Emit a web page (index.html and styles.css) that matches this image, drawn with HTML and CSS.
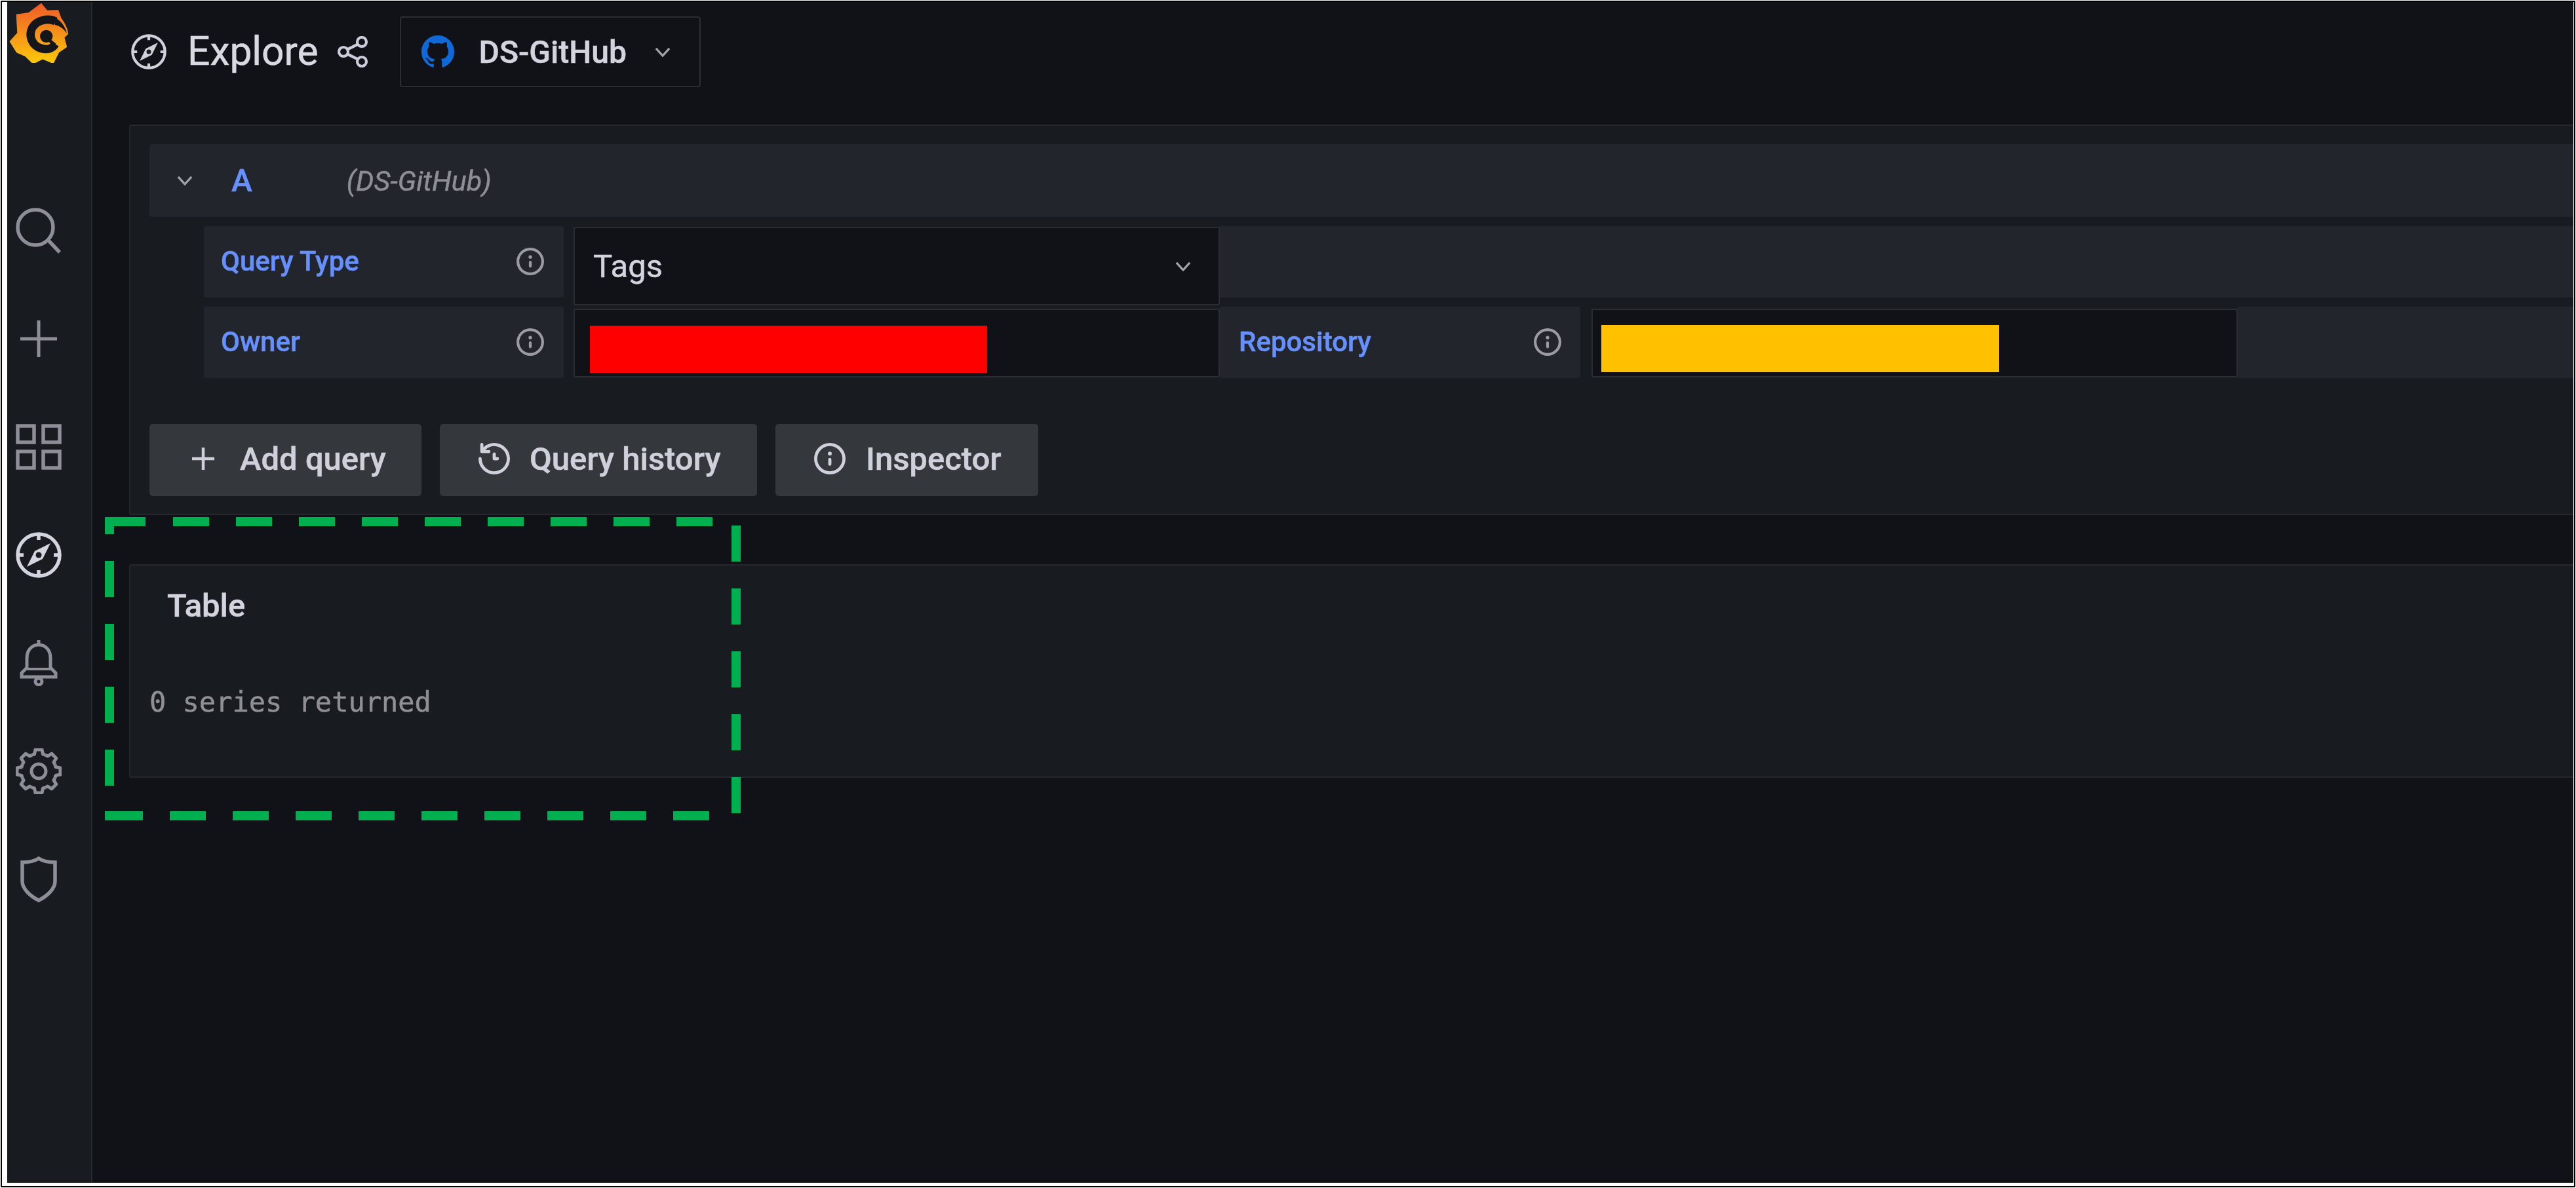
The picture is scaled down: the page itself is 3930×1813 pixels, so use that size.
FILE: index.html
```html
<!DOCTYPE html>
<html lang="en">
<head>
<meta charset="utf-8">
<title>Explore</title>
<link rel="stylesheet" href="styles.css">
</head>
<body>
<svg class="defs" aria-hidden="true">
  <symbol id="i-info" viewBox="2 2 20 20"><path d="M12,2A10,10,0,1,0,22,12,10.01,10.01,0,0,0,12,2Zm0,18a8,8,0,1,1,8-8A8.01,8.01,0,0,1,12,20Zm0-8.5a1,1,0,0,0-1,1v3a1,1,0,0,0,2,0v-3A1,1,0,0,0,12,11.5Zm0-4a1.25,1.25,0,1,0,1.25,1.25A1.25,1.25,0,0,0,12,7.5Z"/></symbol>
  <symbol id="i-chev" viewBox="0 0 26 16"><path d="M2 2 L13 14 L24 2" fill="none" stroke="currentColor" stroke-width="3.6"/></symbol>
  <symbol id="i-compass" viewBox="0 0 70 70">
    <circle cx="35" cy="35" r="32" fill="none" stroke="currentColor" stroke-width="5.5"/>
    <path d="M35 4V12M35 58V66M4 35H12M58 35H66" stroke="currentColor" stroke-width="5.5"/>
    <path d="M53 17 L41 41 L17 53 L29 29Z" fill="currentColor"/>
    <circle cx="35" cy="35" r="4.5" fill="#181b1f"/>
  </symbol>
  <g id="tooth"><path d="M-10.3-24.9L-6.5-26L-5-33L5-33L6.5-26L10.3-24.9" fill="none" stroke="currentColor" stroke-width="5" stroke-linejoin="round"/></g>
</svg>

<div class="frame">
  <div class="app">
    <nav class="sidebar">
      <div class="logo-cell">
        <svg class="logo" viewBox="9 6 276 276">
          <defs><linearGradient id="lg" gradientUnits="userSpaceOnUse" x1="0" y1="10" x2="0" y2="285"><stop offset="0" stop-color="#f05a28"/><stop offset="1" stop-color="#fbca0a"/></linearGradient></defs>
          <path fill="url(#lg)" stroke="url(#lg)" stroke-width="6" stroke-linejoin="round" d="M158 12 L185 44 L235 42 L248 78 C265 100 276 125 280 148 L262 165 L273 208 L238 232 L213 282 L165 262 L122 284 L87 250 L47 232 L17 184 L52 145 L47 62 L102 54 Z"/>
          <path fill="none" stroke="#14161a" stroke-width="38" d="M225 92 C190 75 140 85 118 120 C98 160 118 205 160 216 C190 224 212 214 222 196"/>
          <path fill="#14161a" d="M218 74 C245 84 268 112 276 146 C262 128 245 112 222 108Z"/>
          <circle cx="182" cy="160" r="29" fill="#14161a"/>
          <path fill="none" stroke="#14161a" stroke-width="14" d="M195 178 L222 200"/>
        </svg>
      </div>
      <div class="nav-item">
        <svg class="nav-svg" viewBox="0 0 70 70"><circle cx="30" cy="30" r="27" fill="none" stroke="currentColor" stroke-width="5.5"/><path d="M49 49 L67 68" stroke="currentColor" stroke-width="5.5"/></svg>
      </div>
      <div class="nav-item">
        <svg class="nav-svg" viewBox="0 0 70 70"><path d="M35 7V63M7 35H63" stroke="currentColor" stroke-width="5"/></svg>
      </div>
      <div class="nav-item">
        <svg class="nav-svg" viewBox="0 0 70 70"><g fill="none" stroke="currentColor" stroke-width="5.5"><rect x="3" y="3" width="25" height="25"/><rect x="42" y="3" width="25" height="25"/><rect x="3" y="42" width="25" height="25"/><rect x="42" y="42" width="25" height="25"/></g></svg>
      </div>
      <div class="nav-item nav-active">
        <svg class="nav-svg"><use href="#i-compass"/></svg>
      </div>
      <div class="nav-item">
        <svg class="nav-svg" viewBox="0 0 70 70"><g fill="none" stroke="currentColor" stroke-width="5"><path d="M35 0V7"/><path d="M35 7C24 7 17 16 17 27V42L9 50V56H61V50L53 42V27C53 16 46 7 35 7Z"/><path d="M15 44H55" stroke-width="4"/><circle cx="35" cy="63" r="5"/></g></svg>
      </div>
      <div class="nav-item">
        <svg class="nav-svg" viewBox="-35 -35 70 70"><g>
          <use href="#tooth"/><use href="#tooth" transform="rotate(45)"/><use href="#tooth" transform="rotate(90)"/><use href="#tooth" transform="rotate(135)"/><use href="#tooth" transform="rotate(180)"/><use href="#tooth" transform="rotate(225)"/><use href="#tooth" transform="rotate(270)"/><use href="#tooth" transform="rotate(315)"/>
          <circle r="11" fill="none" stroke="currentColor" stroke-width="5"/></g></svg>
      </div>
      <div class="nav-item">
        <svg class="nav-svg" viewBox="0 0 70 70"><path d="M35 3C41 7 50 9 60 9V38C60 50 47 61 35 67C23 61 10 50 10 38V9C20 9 29 7 35 3Z" fill="none" stroke="currentColor" stroke-width="5.5"/></svg>
      </div>
    </nav>

    <main class="main">
      <header class="topbar">
        <svg class="page-icon"><use href="#i-compass"/></svg>
        <h1 class="page-title">Explore</h1>
        <svg class="share" viewBox="0 0 48 48"><g fill="none" stroke="currentColor" stroke-width="4.2"><circle cx="38" cy="9" r="7"/><circle cx="38" cy="39" r="7"/><circle cx="10" cy="24" r="7"/><path d="M16 20.5L32 12.5M16 27.5L32 35.5"/></g></svg>
        <div class="ds-picker">
          <svg class="gh" viewBox="0 0 24 24"><path d="M12 0C5.37 0 0 5.37 0 12c0 5.3 3.44 9.8 8.21 11.39.6.11.82-.26.82-.58v-2.03c-3.34.73-4.04-1.61-4.04-1.61-.55-1.39-1.33-1.76-1.33-1.76-1.09-.74.08-.73.08-.73 1.2.08 1.84 1.24 1.84 1.24 1.07 1.83 2.81 1.3 3.49 1 .11-.78.42-1.3.76-1.6-2.67-.3-5.47-1.33-5.47-5.93 0-1.31.47-2.38 1.24-3.22-.13-.3-.54-1.52.12-3.18 0 0 1.01-.32 3.3 1.23a11.5 11.5 0 016 0c2.29-1.55 3.3-1.23 3.3-1.23.66 1.66.25 2.88.12 3.18.77.84 1.24 1.91 1.24 3.22 0 4.61-2.81 5.62-5.48 5.92.43.37.82 1.1.82 2.22v3.29c0 .32.22.7.83.58A12 12 0 0024 12c0-6.63-5.37-12-12-12z"/></svg>
          <span class="ds-name">DS-GitHub</span>
          <svg class="chev"><use href="#i-chev"/></svg>
        </div>
      </header>

      <section class="panel query-panel">
        <div class="query-head">
          <svg class="chev"><use href="#i-chev"/></svg>
          <span class="ref-id">A</span>
          <span class="ref-ds">(DS-GitHub)</span>
        </div>

        <div class="field-row">
          <div class="field-label"><span>Query Type</span><svg class="info"><use href="#i-info"/></svg></div>
          <div class="select">
            <span>Tags</span>
            <svg class="chev"><use href="#i-chev"/></svg>
          </div>
          <div class="fill"></div>
        </div>

        <div class="field-row">
          <div class="field-label"><span>Owner</span><svg class="info"><use href="#i-info"/></svg></div>
          <div class="input owner-input"><div class="redact redact-red"></div></div>
          <div class="field-label repo-label"><span>Repository</span><svg class="info"><use href="#i-info"/></svg></div>
          <div class="input repo-input"><div class="redact redact-yellow"></div></div>
          <div class="fill"></div>
        </div>

        <div class="actions">
          <button class="btn btn-add"><svg class="btn-plus" viewBox="0 0 38 38"><path d="M19 2V36M2 19H36" stroke="currentColor" stroke-width="4.5"/></svg><span>Add query</span></button>
          <button class="btn btn-history"><svg class="btn-icon" viewBox="2 2 20 20"><path d="M12,2A10,10,0,0,0,5.12,4.77V3a1,1,0,0,0-2,0V7.5a1,1,0,0,0,1,1H8.62a1,1,0,0,0,0-2H6.22A8,8,0,1,1,4,12a1,1,0,0,0-2,0A10,10,0,1,0,12,2Zm0,6a1,1,0,0,0-1,1v3a1,1,0,0,0,1,1h2a1,1,0,0,0,0-2H13V9A1,1,0,0,0,12,8Z"/></svg><span>Query history</span></button>
          <button class="btn btn-inspect"><svg class="btn-icon"><use href="#i-info"/></svg><span>Inspector</span></button>
        </div>
      </section>

      <section class="panel table-panel">
        <div class="table-title">Table</div>
        <div class="table-empty">0 series returned</div>
      </section>
    </main>

    <svg class="callout" viewBox="0 0 980 470" fill="none" stroke="#00b050" aria-hidden="true">
      <path stroke-width="14" d="M0 14H62"/>
      <path stroke-width="14" stroke-dasharray="55 41" d="M104 14H928"/>
      <path stroke-width="14" d="M7 7V33"/>
      <path stroke-width="14" stroke-dasharray="55 41" d="M7 74V420"/>
      <path stroke-width="14" stroke-dasharray="55 41" d="M963 20V462"/>
      <path stroke-width="14" d="M0 463H58"/>
      <path stroke-width="14" stroke-dasharray="55 41" d="M99 463H924"/>
    </svg>
  </div>
</div>
</body>
</html>
```

FILE: styles.css
```css
* { box-sizing: border-box; }
html, body { margin: 0; height: 100%; }
body {
  background: #fff;
  padding: 1px;
  overflow: hidden;
  font-family: Roboto, "Liberation Sans", sans-serif;
}
.defs { display: none; }

.frame {
  height: 1811px;
  border: 2px solid #000;
  background: #fff;
  padding: 0 1px 5px 8px;
}
.app {
  position: relative;
  display: flex;
  height: 1802px;
  background: #111217;
  color: #ccccdc;
}

/* the source picture was enlarged, so its glyphs and icons are slightly soft */
.logo, .nav-svg, .page-icon, .page-title, .share, .gh, .ds-name, .chev,
.ref-id, .ref-ds, .field-label span, .info, .select span,
.btn span, .btn svg, .table-title, .table-empty {
  filter: blur(0.7px);
}
.page-title, .ds-name, .ref-id, .ref-ds, .field-label span, .select span,
.btn span, .table-title, .table-empty {
  -webkit-text-stroke: 0.5px currentColor;
}

/* sidebar */
.sidebar {
  flex: none;
  width: 130px;
  padding-right: 32px;
  background: #181b1f;
  border-right: 2px solid #25282d;
  color: #8e8e98;
}
.logo-cell {
  height: 266px;
  padding-top: 1px;
  display: flex;
  justify-content: center;
  align-items: flex-start;
}
.logo { width: 92px; height: 92px; }
.nav-item {
  height: 165px;
  display: flex;
  align-items: center;
  justify-content: center;
}
.nav-svg { width: 70px; height: 70px; }
.nav-active { color: #d4d4e0; }

/* main */
.main {
  flex: 1;
  min-width: 0;
  display: flex;
  flex-direction: column;
  padding-left: 56px;
}
.topbar {
  display: flex;
  align-items: center;
  height: 108px;
  margin-top: 22px;
  padding-left: 3px;
}
.page-icon { width: 54px; height: 54px; color: #d0d0dc; }
.page-title {
  margin: 0 0 0 32px;
  font-size: 60.5px;
  font-weight: 400;
  line-height: 1;
  color: #d8d9e2;
}
.share { width: 48px; height: 48px; margin-left: 28px; color: #ccccdc; }
.ds-picker {
  display: flex;
  align-items: center;
  width: 459px;
  height: 108px;
  margin-left: 48px;
  padding-left: 31px;
  border: 2px solid #2a2d33;
  border-radius: 4px;
}
.gh { width: 50px; height: 50px; fill: #0f6ad8; }
.ds-name {
  margin-left: 38px;
  font-size: 48px;
  font-weight: 500;
  color: #d4d4e0;
}
.chev { width: 24px; height: 15px; color: #a2a2aa; }
.ds-picker .chev { margin-left: 43px; }

.panel {
  background: #181b1f;
  border: 2px solid #24272c;
  border-right: 0;
  border-radius: 4px 0 0 4px;
}
.query-panel {
  height: 596px;
  margin-top: 57px;
  padding: 28px 0 0 29px;
}
.query-head {
  display: flex;
  align-items: center;
  height: 111px;
  padding-left: 42px;
  background: #22252b;
  border-radius: 4px 0 0 4px;
}
.ref-id {
  margin-left: 59px;
  font-size: 48px;
  font-weight: 500;
  color: #6690ff;
}
.ref-ds {
  margin-left: 144px;
  font-size: 43px;
  font-style: italic;
  color: #8e8e96;
}
.field-row {
  display: flex;
  align-items: flex-start;
  height: 109px;
  margin: 14px 0 0 83px;
}
.field-label {
  flex: none;
  display: flex;
  align-items: center;
  justify-content: space-between;
  width: 549px;
  height: 109px;
  margin-right: 15px;
  padding: 0 30px 2px 26px;
  background: #22252b;
  border-radius: 3px;
  font-size: 42px;
  font-weight: 500;
  color: #6690ff;
}
.info { width: 42px; height: 42px; fill: #9b9ba3; }
.select {
  flex: none;
  display: flex;
  align-items: center;
  justify-content: space-between;
  width: 986px;
  height: 120px;
  margin-top: 1px;
  padding: 0 42px 0 28px;
  background: #111217;
  border: 2px solid #2a2d33;
  border-radius: 3px;
  font-size: 49px;
  color: #d4d4e0;
}
.fill {
  flex: 1;
  height: 109px;
  background: #22252b;
}
.input {
  flex: none;
  display: flex;
  align-items: flex-end;
  height: 105px;
  margin-top: 3px;
  background: #111217;
  border: 2px solid #2a2d33;
  border-radius: 3px;
}
.owner-input { width: 986px; padding: 0 0 5px 23px; }
.repo-input { width: 986px; padding: 0 0 6px 13px; }
.redact { height: 72px; }
.redact-red { width: 606px; background: #ff0000; }
.redact-yellow { width: 607px; background: #ffc000; }
.repo-label { width: 550px; margin-right: 17px; padding: 0 29px 2px 29px; }

.actions {
  display: flex;
  gap: 28px;
  margin-top: 70px;
}
.btn {
  display: flex;
  align-items: center;
  height: 110px;
  margin: 0;
  border: 0;
  border-radius: 5px;
  background: #34373c;
  color: #d0d0dc;
  font: 500 49px Roboto, "Liberation Sans", sans-serif;
}
.btn-add { width: 415px; padding: 0 0 4px 63px; }
.btn-history { width: 484px; padding: 0 0 4px 59px; }
.btn-inspect { width: 401px; padding: 0 0 4px 59px; }
.btn-plus { width: 38px; height: 38px; margin-right: 37px; }
.btn-icon { width: 48px; height: 48px; margin-right: 30px; fill: currentColor; }
.btn-inspect .btn-icon { margin-right: 31px; }

.table-panel {
  height: 326px;
  margin-top: 75px;
  padding: 35px 0 0 29px;
}
.table-title {
  margin-left: 27px;
  font-size: 49px;
  font-weight: 500;
  line-height: 54px;
  color: #d4d4e0;
}
.table-empty {
  margin-top: 96px;
  font-family: "DejaVu Sans Mono", "Liberation Mono", monospace;
  font-size: 42px;
  line-height: 48px;
  color: #8f8f96;
}

/* annotation drawn over the screenshot */
.callout {
  position: absolute;
  left: 149px;
  top: 779px;
  width: 980px;
  height: 470px;
  pointer-events: none;
}
```
